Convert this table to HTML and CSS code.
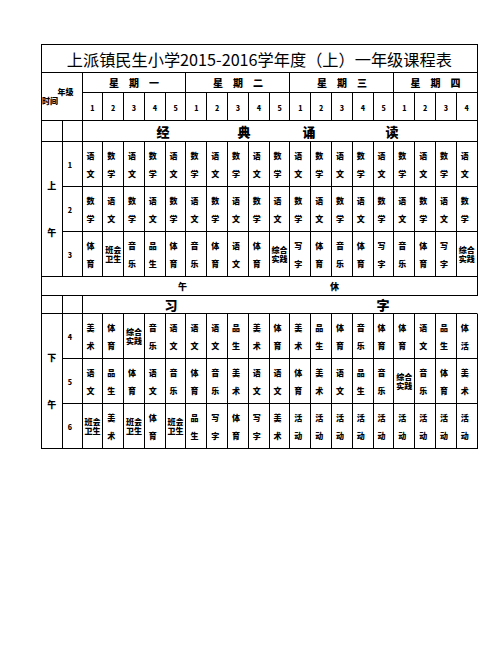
FILE: index.html
```html
<!DOCTYPE html>
<html lang="zh-CN">
<head>
<meta charset="utf-8">
<title>课程表</title>
<link rel="stylesheet" href="styles.css">
</head>
<body>
<div class="sheet">
  <div class="c title">上派镇民生小学2015-2016学年度（上）一年级课程表</div>

  <div class="c corner"><span class="grade">年级</span><span class="time">时间</span></div>
  <div class="c day d5">星期一</div>
  <div class="c day d5">星期二</div>
  <div class="c day d5">星期三</div>
  <div class="c day d4">星期四</div>

  <div class="c num">1</div><div class="c num">2</div><div class="c num">3</div><div class="c num">4</div><div class="c num">5</div>
  <div class="c num">1</div><div class="c num">2</div><div class="c num">3</div><div class="c num">4</div><div class="c num">5</div>
  <div class="c num">1</div><div class="c num">2</div><div class="c num">3</div><div class="c num">4</div><div class="c num">5</div>
  <div class="c num">1</div><div class="c num">2</div><div class="c num">3</div><div class="c num">4</div>

  <div class="c"></div><div class="c"></div>
  <div class="c band read"><span class="r1">经</span><span class="r2">典</span><span class="r3">诵</span><span class="r4">读</span></div>

  <div class="c half"><span>上</span><span>午</span></div>
  <div class="c per">1</div>
  <div class="c s"><b>语</b><b>文</b></div><div class="c s"><b>数</b><b>学</b></div><div class="c s"><b>语</b><b>文</b></div><div class="c s"><b>数</b><b>学</b></div><div class="c s"><b>语</b><b>文</b></div>
  <div class="c s"><b>数</b><b>学</b></div><div class="c s"><b>语</b><b>文</b></div><div class="c s"><b>数</b><b>学</b></div><div class="c s"><b>语</b><b>文</b></div><div class="c s"><b>数</b><b>学</b></div>
  <div class="c s"><b>语</b><b>文</b></div><div class="c s"><b>数</b><b>学</b></div><div class="c s"><b>语</b><b>文</b></div><div class="c s"><b>数</b><b>学</b></div><div class="c s"><b>语</b><b>文</b></div>
  <div class="c s"><b>数</b><b>学</b></div><div class="c s"><b>语</b><b>文</b></div><div class="c s"><b>数</b><b>学</b></div><div class="c s"><b>语</b><b>文</b></div>

  <div class="c per">2</div>
  <div class="c s"><b>数</b><b>学</b></div><div class="c s"><b>语</b><b>文</b></div><div class="c s"><b>数</b><b>学</b></div><div class="c s"><b>语</b><b>文</b></div><div class="c s"><b>数</b><b>学</b></div>
  <div class="c s"><b>语</b><b>文</b></div><div class="c s"><b>数</b><b>学</b></div><div class="c s"><b>语</b><b>文</b></div><div class="c s"><b>数</b><b>学</b></div><div class="c s"><b>语</b><b>文</b></div>
  <div class="c s"><b>数</b><b>学</b></div><div class="c s"><b>语</b><b>文</b></div><div class="c s"><b>数</b><b>学</b></div><div class="c s"><b>语</b><b>文</b></div><div class="c s"><b>数</b><b>学</b></div>
  <div class="c s"><b>语</b><b>文</b></div><div class="c s"><b>数</b><b>学</b></div><div class="c s"><b>语</b><b>文</b></div><div class="c s"><b>数</b><b>学</b></div>

  <div class="c per">3</div>
  <div class="c s"><b>体</b><b>育</b></div><div class="c s t"><b>班会</b><b>卫生</b></div><div class="c s"><b>音</b><b>乐</b></div><div class="c s"><b>品</b><b>生</b></div><div class="c s"><b>体</b><b>育</b></div>
  <div class="c s"><b>音</b><b>乐</b></div><div class="c s"><b>体</b><b>育</b></div><div class="c s"><b>语</b><b>文</b></div><div class="c s"><b>体</b><b>育</b></div><div class="c s t"><b>综合</b><b>实践</b></div>
  <div class="c s"><b>写</b><b>字</b></div><div class="c s"><b>体</b><b>育</b></div><div class="c s"><b>音</b><b>乐</b></div><div class="c s"><b>体</b><b>育</b></div><div class="c s"><b>写</b><b>字</b></div>
  <div class="c s"><b>音</b><b>乐</b></div><div class="c s"><b>体</b><b>育</b></div><div class="c s"><b>写</b><b>字</b></div><div class="c s t"><b>综合</b><b>实践</b></div>

  <div class="c rest"><span class="w1">午</span><span class="w2">休</span></div>

  <div class="c"></div><div class="c"></div>
  <div class="c band write"><span class="x1">习</span><span class="x2">字</span></div>

  <div class="c half"><span>下</span><span>午</span></div>
  <div class="c per">4</div>
  <div class="c s"><b>美</b><b>术</b></div><div class="c s"><b>体</b><b>育</b></div><div class="c s t"><b>综合</b><b>实践</b></div><div class="c s"><b>音</b><b>乐</b></div><div class="c s"><b>语</b><b>文</b></div>
  <div class="c s"><b>语</b><b>文</b></div><div class="c s"><b>语</b><b>文</b></div><div class="c s"><b>品</b><b>生</b></div><div class="c s"><b>美</b><b>术</b></div><div class="c s"><b>体</b><b>育</b></div>
  <div class="c s"><b>美</b><b>术</b></div><div class="c s"><b>品</b><b>生</b></div><div class="c s"><b>体</b><b>育</b></div><div class="c s"><b>音</b><b>乐</b></div><div class="c s"><b>体</b><b>育</b></div>
  <div class="c s"><b>体</b><b>育</b></div><div class="c s"><b>语</b><b>文</b></div><div class="c s"><b>品</b><b>生</b></div><div class="c s"><b>体</b><b>活</b></div>

  <div class="c per">5</div>
  <div class="c s"><b>语</b><b>文</b></div><div class="c s"><b>品</b><b>生</b></div><div class="c s"><b>体</b><b>育</b></div><div class="c s"><b>语</b><b>文</b></div><div class="c s"><b>音</b><b>乐</b></div>
  <div class="c s"><b>体</b><b>育</b></div><div class="c s"><b>音</b><b>乐</b></div><div class="c s"><b>美</b><b>术</b></div><div class="c s"><b>语</b><b>文</b></div><div class="c s"><b>语</b><b>文</b></div>
  <div class="c s"><b>体</b><b>育</b></div><div class="c s"><b>美</b><b>术</b></div><div class="c s"><b>语</b><b>文</b></div><div class="c s"><b>品</b><b>生</b></div><div class="c s"><b>音</b><b>乐</b></div>
  <div class="c s t"><b>综合</b><b>实践</b></div><div class="c s"><b>音</b><b>乐</b></div><div class="c s"><b>体</b><b>育</b></div><div class="c s"><b>美</b><b>术</b></div>

  <div class="c per">6</div>
  <div class="c s t"><b>班会</b><b>卫生</b></div><div class="c s"><b>美</b><b>术</b></div><div class="c s t"><b>班会</b><b>卫生</b></div><div class="c s"><b>体</b><b>育</b></div><div class="c s t"><b>班会</b><b>卫生</b></div>
  <div class="c s"><b>品</b><b>生</b></div><div class="c s"><b>写</b><b>字</b></div><div class="c s"><b>体</b><b>育</b></div><div class="c s"><b>写</b><b>字</b></div><div class="c s"><b>美</b><b>术</b></div>
  <div class="c s"><b>活</b><b>动</b></div><div class="c s"><b>活</b><b>动</b></div><div class="c s"><b>活</b><b>动</b></div><div class="c s"><b>活</b><b>动</b></div><div class="c s"><b>活</b><b>动</b></div>
  <div class="c s"><b>活</b><b>动</b></div><div class="c s"><b>活</b><b>动</b></div><div class="c s"><b>活</b><b>动</b></div><div class="c s"><b>活</b><b>动</b></div>
</div>
</body>
</html>
```

FILE: styles.css
```css
html, body {
  margin: 0;
  padding: 0;
  background: #fff;
}

.sheet {
  display: grid;
  grid-template-columns: 20.5px 20px repeat(19, 20.8px);
  grid-template-rows: 28px 20px 28px 21px 45px 45px 45px 19px 18px 45px 45px 45px;
  width: max-content;
  margin: 44px 0 0 41px;
  border-top: 1px solid #000;
  border-left: 1px solid #000;
  font-family: "Noto Sans CJK SC", "Noto Sans", sans-serif;
  color: #000;
}

.c {
  box-sizing: border-box;
  border-right: 1px solid #000;
  border-bottom: 1px solid #000;
  display: flex;
  align-items: center;
  justify-content: center;
  font-weight: 900;
  line-height: 1;
  overflow: hidden;
}

.title {
  grid-column: 1 / -1;
  font-weight: 400;
  font-size: 16.2px;
  padding-top: 2px;
}

.corner {
  grid-column: span 2;
  grid-row: span 2;
  flex-direction: column;
  align-items: stretch;
  justify-content: center;
  gap: 1px;
  font-size: 8px;
}

.grade {
  align-self: flex-end;
  margin-right: 8px;
}

.time {
  align-self: flex-start;
}

.d5 { grid-column: span 5; }
.d4 { grid-column: span 4; }

.day {
  font-size: 10px;
  letter-spacing: 10px;
  padding-left: 10px;
}

.num {
  font-size: 7px;
  padding-top: 3px;
}

.band {
  grid-column: span 19;
  justify-content: flex-start;
  font-size: 13px;
}

.r1 { margin-left: 74px; }
.r2 { margin-left: 68px; }
.r3 { margin-left: 52px; }
.r4 { margin-left: 70px; }

.write {
  border-right-color: transparent;
}

.x1 { margin-left: 82px; }
.x2 { margin-left: 199px; }

.rest {
  grid-column: 1 / -1;
  justify-content: flex-start;
  font-size: 9px;
}

.w1 { margin-left: 136px; }
.w2 { margin-left: 143px; }

.half {
  grid-row: span 3;
  flex-direction: column;
  gap: 38px;
  font-size: 9px;
}

.per {
  font-size: 7px;
  padding-right: 4px;
  padding-top: 3px;
}

.s {
  flex-direction: column;
  gap: 10px;
  font-size: 8px;
  line-height: 8px;
  padding-right: 4px;
  padding-top: 2px;
}

.s b {
  font-weight: 900;
  display: block;
}

.s.t {
  gap: 0;
  font-size: 8px;
  line-height: 9px;
  padding-right: 0;
  padding-top: 0;
  white-space: nowrap;
}
```
